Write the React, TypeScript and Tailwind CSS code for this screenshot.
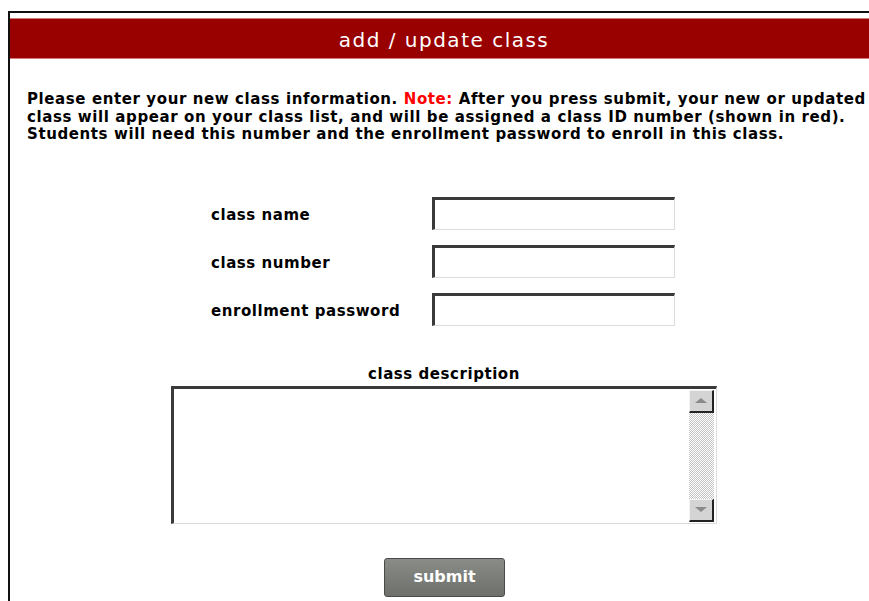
import React from "react";

const font = { fontFamily: '"DejaVu Sans", Verdana, sans-serif' };

function Field({ label }: { label: string }) {
  return (
    <div className="flex items-center h-[33px]">
      <div className="w-[221px] text-[15px] tracking-[0.55px] font-bold text-black pt-[5px]">{label}</div>
      <div className="w-[243px] h-[33px] border-t-[3px] border-l-[3px] border-t-[#3a3a3a] border-l-[#3a3a3a] border-r border-b border-r-[#dcdcdc] border-b-[#dcdcdc] bg-white" />
    </div>
  );
}

function ScrollButton({ dir }: { dir: "up" | "down" }) {
  return (
    <div className="w-[25px] h-[23px] bg-[#d4d4d4] border-t border-l border-t-[#f4f4f4] border-l-[#f4f4f4] border-r-2 border-b-2 border-r-[#222] border-b-[#222] flex items-center justify-center">
      {dir === "up" ? (
        <div className="w-0 h-0 border-l-[6px] border-r-[6px] border-b-[5px] border-l-transparent border-r-transparent border-b-[#8a8a8a]" />
      ) : (
        <div className="w-0 h-0 border-l-[6px] border-r-[6px] border-t-[5px] border-l-transparent border-r-transparent border-t-[#8a8a8a]" />
      )}
    </div>
  );
}

export default function App() {
  return (
    <div className="w-[869px] h-[601px] bg-white overflow-hidden" style={font}>
      <div className="ml-[8px] mt-[11px] h-[590px] border-l-[2px] border-t-[2px] border-[#111]">
        <div className="pt-[5px]">
          <div className="h-[41px] bg-[#990000] border-t border-b border-t-[#d07a7a] border-b-[#d07a7a] flex items-center justify-center">
            <span className="text-white text-[20px] tracking-[1.5px] pt-[2px] pl-[9px]">add / update class</span>
          </div>
        </div>

        <div className="pl-[17px] pt-[32px] text-[15px] tracking-[0.6px] font-bold leading-[17.5px] text-black whitespace-nowrap">
          <div>
            Please enter your new class information. <span className="text-[#ff0000]">Note:</span> After you press submit, your new or updated
          </div>
          <div>class will appear on your class list, and will be assigned a class ID number (shown in red).</div>
          <div>Students will need this number and the enrollment password to enroll in this class.</div>
        </div>

        <div className="pl-[201px] pt-[53px] flex flex-col gap-[15px]">
          <Field label="class name" />
          <Field label="class number" />
          <Field label="enrollment password" />
        </div>

        <div className="pt-[40px] flex flex-col items-center">
          <div className="text-[15px] tracking-[0.55px] font-bold text-black leading-[17px] mb-[3px] ml-[9px]">class description</div>
          <div className="w-[546px] h-[138px] ml-[8px] flex border-t-[3px] border-l-[3px] border-t-[#3a3a3a] border-l-[#3a3a3a] border-r border-b border-r-[#dcdcdc] border-b-[#dcdcdc] bg-white">
            <div className="flex-1" />
            <div className="w-[25px] mr-[2px] flex flex-col pt-[1px] pb-[1px]">
              <ScrollButton dir="up" />
              <div className="flex-1 bg-[repeating-conic-gradient(#c4c4c4_0_25%,#ffffff_0_50%)] bg-[length:2px_2px]" />
              <ScrollButton dir="down" />
            </div>
          </div>
        </div>

        <div className="pt-[34px] flex justify-center">
          <button className="w-[121px] h-[39px] ml-[10px] rounded-[3px] border border-[#4a4a4a] bg-gradient-to-b from-[#8a8c88] to-[#6e706c] text-white text-[16px] font-bold">
            submit
          </button>
        </div>
      </div>
    </div>
  );
}
